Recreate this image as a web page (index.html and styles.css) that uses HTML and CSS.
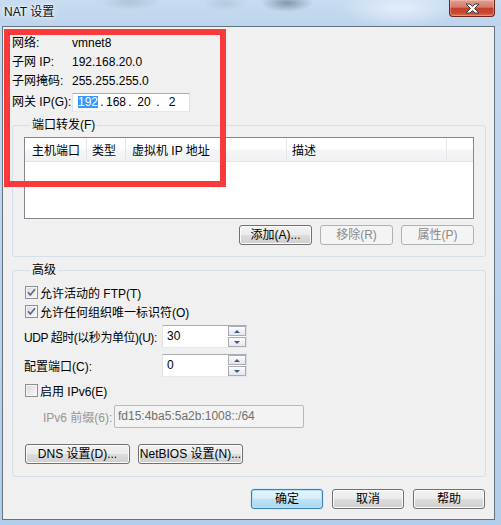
FILE: index.html
```html
<!DOCTYPE html>
<html>
<head>
<meta charset="utf-8">
<link rel="stylesheet" href="styles.css">
</head>
<body>
<div class="window">
  <div class="titlebar">
    <span class="title">NAT 设置</span>
    <span class="close">
      <svg width="15" height="11" viewBox="0 0 15 11"><polygon points="1,1 5,1 7.5,3.5 10,1 14,1 9.5,5.5 14,10 10,10 7.5,7.5 5,10 1,10 5.5,5.5" fill="#fff" stroke="#3b3b3b" stroke-width="1" stroke-linejoin="round"/></svg>
    </span>
  </div>
  <div class="client">
    <div class="info">
      <div class="row"><span class="lbl">网络:</span><span>vmnet8</span></div>
      <div class="row"><span class="lbl">子网 IP:</span><span>192.168.20.0</span></div>
      <div class="row"><span class="lbl">子网掩码:</span><span>255.255.255.0</span></div>
      <div class="row gw"><span class="lbl">网关 IP(G):</span>
        <div class="ipbox">
          <span class="ipf"><span class="sel">192</span></span><span class="ipd">.</span><span class="ipf">168</span><span class="ipd">.</span><span class="ipf">20</span><span class="ipd">.</span><span class="ipf">2</span>
        </div>
      </div>
    </div>

    <fieldset class="group g1">
      <legend>端口转发(F)</legend>
      <div class="list">
        <div class="lhead">
          <span class="hc col1">主机端口</span><span class="hc col2">类型</span><span class="hc col3">虚拟机 IP 地址</span><span class="hc col4">描述</span><span class="hc col5"></span>
        </div>
      </div>
      <div class="btnrow">
        <button class="btn">添加(A)...</button>
        <button class="btn" disabled>移除(R)</button>
        <button class="btn" disabled>属性(P)</button>
      </div>
    </fieldset>

    <fieldset class="group g2">
      <legend>高级</legend>
      <div class="chk"><span class="box"><svg width="11" height="11" viewBox="0 0 11 11"><path d="M2 5.2 L4.3 8 L9 2.2" fill="none" stroke="#56668f" stroke-width="1.6"/></svg></span>允许活动的 FTP(T)</div>
      <div class="chk"><span class="box"><svg width="11" height="11" viewBox="0 0 11 11"><path d="M2 5.2 L4.3 8 L9 2.2" fill="none" stroke="#56668f" stroke-width="1.6"/></svg></span>允许任何组织唯一标识符(O)</div>
      <div class="frow udp"><span class="flbl tight">UDP 超时(以秒为单位)(U):</span>
        <div class="spin"><span class="sval">30</span><span class="sbtns"><span class="sb"><i class="up"></i></span><span class="sb"><i class="dn"></i></span></span></div>
      </div>
      <div class="frow cfg"><span class="flbl">配置端口(C):</span>
        <div class="spin"><span class="sval">0</span><span class="sbtns"><span class="sb"><i class="up"></i></span><span class="sb"><i class="dn"></i></span></span></div>
      </div>
      <div class="chk v6chk"><span class="box"></span>启用 IPv6(E)</div>
      <div class="frow v6"><span class="plbl">IPv6 前缀(6):</span><div class="pfx">fd15:4ba5:5a2b:1008::/64</div></div>
      <div class="dnsrow">
        <button class="btn wide">DNS 设置(D)...</button>
        <button class="btn wide">NetBIOS 设置(N)...</button>
      </div>
    </fieldset>

    <div class="dlgbtns">
      <button class="btn dlg def">确定</button>
      <button class="btn dlg">取消</button>
      <button class="btn dlg">帮助</button>
    </div>
  </div>
  <div class="mark"></div>
</div>
</body>
</html>
```

FILE: styles.css
```css
html, body {
  margin: 0;
  padding: 0;
}
body {
  background: #b8d0ea;
  font-family: "Liberation Sans", "Noto Sans CJK SC", sans-serif;
  font-size: 12px;
  color: #000;
}
.window {
  position: relative;
  width: 501px;
  height: 525px;
  overflow: hidden;
  background: linear-gradient(#c6daef, #b3cce8);
}
.titlebar {
  height: 26px;
  display: flex;
  justify-content: space-between;
  align-items: flex-start;
  background:
    radial-gradient(ellipse 26px 9px at 287px 3px, rgba(110,128,150,0.75), rgba(110,128,150,0) 100%),
    radial-gradient(ellipse 30px 8px at 130px 2px, rgba(150,165,185,0.45), rgba(150,165,185,0) 100%),
    radial-gradient(ellipse 22px 8px at 225px 3px, rgba(150,165,185,0.35), rgba(150,165,185,0) 100%),
    radial-gradient(ellipse 60px 20px at 400px 8px, rgba(235,243,252,0.8), rgba(235,243,252,0) 100%),
    linear-gradient(#c8dcf1, #bdd4ec);
}
.title {
  padding-left: 4px;
  line-height: 24px;
  color: #111;
  text-shadow: 0 0 6px #fff, 0 0 3px #fff;
}
.close {
  width: 46px;
  height: 17px;
  margin-right: 6px;
  box-sizing: border-box;
  border: 1px solid #6b241c;
  border-top: none;
  border-radius: 0 0 4px 4px;
  background: linear-gradient(#e3a091 0%, #d57a69 45%, #c2422d 52%, #c9462f 80%, #dc7352 100%);
  box-shadow: inset 0 0 0 1px rgba(255,220,210,0.35);
  display: flex;
  align-items: center;
  justify-content: center;
}
.client {
  margin-left: 2px;
  width: 493px;
  height: 494px;
  box-sizing: border-box;
  border: 1px solid #65737f;
  background: #f0f0f0;
  padding: 7px 8px 0 9px;
}
.row {
  display: flex;
  align-items: center;
  height: 19px;
  line-height: 19px;
}
.lbl {
  width: 60px;
  flex: none;
}
.gw {
  margin-top: 2px;
}
.ipbox {
  width: 118px;
  height: 19px;
  box-sizing: border-box;
  border: 1px solid;
  border-color: #abadb3 #dbdfe6 #e3e9ef #e2e3ea;
  background: #fff;
  display: flex;
  align-items: center;
  padding-left: 4px;
  line-height: 17px;
}
.ipf {
  width: 22px;
  text-align: center;
}
.ipd {
  width: 6px;
  text-align: center;
}
.sel {
  display: inline-block;
  background: #3399ff;
  color: #fff;
  line-height: 12px;
}
.group {
  margin: 6px 0 0;
  border: 1px solid #d5dfe5;
  border-radius: 3px;
  min-width: 0;
}
.group legend {
  margin-left: 6px;
  padding: 0 2px;
  height: 14px;
  line-height: 14px;
}
.g1 {
  padding: 5px 11px 11px;
}
.list {
  height: 82px;
  box-sizing: border-box;
  border: 1px solid #828790;
  background: #fff;
}
.lhead {
  display: flex;
  height: 24px;
  box-sizing: border-box;
  border-bottom: 1px solid #e5e5e5;
  background: linear-gradient(#ffffff 0%, #ffffff 45%, #f4f5f7 55%, #f1f2f4 100%);
}
.hc {
  box-sizing: border-box;
  height: 23px;
  display: flex;
  align-items: center;
  border-right: 1px solid #e3e5e8;
  white-space: nowrap;
  overflow: hidden;
}
.col1 { width: 62px; padding-left: 7px; }
.col2 { width: 39px; padding-left: 5px; }
.col3 { width: 161px; padding-left: 6px; }
.col4 { width: 160px; padding-left: 5px; }
.col5 { flex: 1; border-right: none; }
.btnrow {
  display: flex;
  justify-content: flex-end;
  gap: 8px;
  margin-top: 6px;
}
.btn {
  width: 73px;
  height: 20px;
  box-sizing: border-box;
  margin: 0;
  padding: 0;
  border: 1px solid #707070;
  border-radius: 3px;
  background: linear-gradient(#f2f2f2 0%, #ebebeb 50%, #dddddd 50%, #cfcfcf 100%);
  box-shadow: inset 0 0 0 1px #fbfbfb;
  font: inherit;
  line-height: 18px;
  color: #000;
  white-space: nowrap;
}
.btn:disabled {
  border-color: #adb2b5;
  background: #f4f4f4;
  box-shadow: none;
  color: #8a8a8a;
}
.g2 {
  padding: 6px 11px 12px;
}
.chk {
  display: flex;
  align-items: center;
  height: 19px;
  margin-left: 1px;
}
.box {
  width: 13px;
  height: 13px;
  flex: none;
  box-sizing: border-box;
  border: 1px solid #8e8f8f;
  background: linear-gradient(135deg, #dadada, #f8f8f8);
  box-shadow: inset 0 0 0 1px #f4f4f4;
  margin-right: 2px;
  display: flex;
  align-items: center;
  justify-content: center;
}
.frow {
  display: flex;
  align-items: center;
  height: 23px;
}
.udp { margin-top: 4px; }
.cfg { margin-top: 6px; }
.v6chk { margin-top: 4px; }
.v6 { margin-top: 5px; }
.flbl {
  width: 138px;
  flex: none;
  white-space: nowrap;
}
.tight {
  letter-spacing: -0.45px;
}
.spin {
  width: 85px;
  height: 23px;
  box-sizing: border-box;
  display: flex;
  border: 1px solid;
  border-color: #abadb3 #dbdfe6 #e3e9ef #e2e3ea;
  background: #fff;
}
.sval {
  flex: 1;
  padding-left: 4px;
  line-height: 21px;
}
.sbtns {
  width: 18px;
  display: flex;
  flex-direction: column;
  gap: 1px;
  background: #fff;
}
.sb {
  flex: 1;
  box-sizing: border-box;
  border: 1px solid #a9adb3;
  background: linear-gradient(#fcfcfc, #e4e7ec);
  display: flex;
  align-items: center;
  justify-content: center;
}
.up {
  width: 0;
  height: 0;
  border-left: 3px solid transparent;
  border-right: 3px solid transparent;
  border-bottom: 3px solid #45568a;
}
.dn {
  width: 0;
  height: 0;
  border-left: 3px solid transparent;
  border-right: 3px solid transparent;
  border-top: 3px solid #45568a;
}
.plbl {
  width: 90px;
  flex: none;
  box-sizing: border-box;
  padding-left: 19px;
  color: #959595;
  white-space: nowrap;
}
.pfx {
  width: 190px;
  height: 23px;
  box-sizing: border-box;
  border: 1px solid #b5b9bd;
  border-radius: 2px;
  background: #f3f3f3;
  color: #6f6f6f;
  padding-left: 3px;
  line-height: 21px;
}
.dnsrow {
  display: flex;
  gap: 8px;
  margin-top: 16px;
  margin-left: 1px;
}
.btn.wide {
  width: 105px;
}
.dlgbtns {
  display: flex;
  justify-content: flex-end;
  gap: 9px;
  margin-top: 12px;
  padding-right: 1px;
}
.btn.dlg {
  width: 72px;
}
.btn.def {
  border-color: #3c7fb1;
  background: linear-gradient(#e5f4fc 0%, #d6eefb 50%, #bde4f8 50%, #a8d8f3 100%);
  box-shadow: inset 0 0 0 1px #b6e1fb, 0 0 1px #61b3e8;
}
.mark {
  position: absolute;
  left: 4px;
  top: 29px;
  width: 222px;
  height: 158px;
  box-sizing: border-box;
  border: 6px solid #fa3a3a;
}
```
